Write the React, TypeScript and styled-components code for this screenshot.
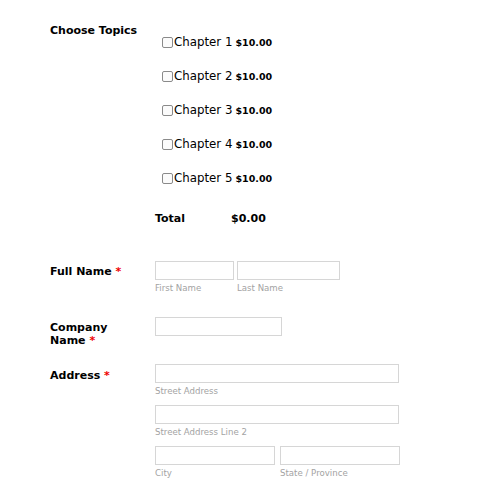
import React from 'react'
import styled, { createGlobalStyle } from 'styled-components'

const GlobalStyle = createGlobalStyle`
  body {
    margin: 0;
    background: #fff;
    font-family: 'DejaVu Sans', Verdana, sans-serif;
    color: #000;
  }
`

const Form = styled.div`
  padding: 22px 0 0 50px;
  width: 450px;
`

const Line = styled.div<{ mb?: number }>`
  display: grid;
  grid-template-columns: 105px 1fr;
  margin-bottom: ${({ mb }) => (mb !== undefined ? mb : 30)}px;
`

const Label = styled.div<{ pt?: number }>`
  font-size: 11px;
  font-weight: bold;
  line-height: 13px;
  padding-top: ${({ pt }) => pt || 0}px;
`

const Star = styled.span`
  color: #e00;
`

const Topics = styled.div`
  padding: 10px 0 0 7px;
  display: flex;
  flex-direction: column;
  gap: 14px;
`

const Topic = styled.label`
  display: flex;
  align-items: center;
  height: 20px;
  font-size: 11.8px;
`

const Check = styled.span`
  width: 9px;
  height: 9px;
  border: 1px solid #8a8a8a;
  border-radius: 2px;
  margin-right: 1px;
  margin-top: 1px;
  background: #fbfbfb;
`

const Price = styled.b`
  font-size: 9.5px;
  margin-left: 3px;
  margin-top: 1px;
`

const Total = styled.div`
  display: flex;
  font-weight: bold;
  font-size: 11px;
  line-height: 13px;
  margin-top: 24px;
  & > span:first-child {
    width: 76px;
  }
`

const Fields = styled.div`
  display: flex;
  flex-direction: column;
  gap: 8px;
`

const FieldRow = styled.div<{ gap: number }>`
  display: flex;
  gap: ${({ gap }) => gap}px;
`

const Field = styled.div`
  display: flex;
  flex-direction: column;
`

const Input = styled.div<{ w: number }>`
  width: ${({ w }) => w}px;
  height: 19px;
  box-sizing: border-box;
  border: 1px solid #d6d6d6;
  background: #fff;
`

const Sub = styled.div`
  font-size: 8.6px;
  color: #a3a3a3;
  margin-top: 2px;
  line-height: 12px;
  height: 12px;
`

const chapters = [1, 2, 3, 4, 5]

export default function App() {
  return (
    <>
      <GlobalStyle />
      <Form>
        <Line mb={36}>
          <Label pt={2}>Choose Topics</Label>
          <div>
            <Topics>
              {chapters.map((n) => (
                <Topic key={n}>
                  <Check />
                  Chapter {n}
                  <Price>$10.00</Price>
                </Topic>
              ))}
            </Topics>
            <Total>
              <span>Total</span>
              <span>$0.00</span>
            </Total>
          </div>
        </Line>
        <Line mb={23}>
          <Label pt={4}>
            Full Name <Star>*</Star>
          </Label>
          <FieldRow gap={3}>
            <Field>
              <Input w={79} />
              <Sub>First Name</Sub>
            </Field>
            <Field>
              <Input w={103} />
              <Sub>Last Name</Sub>
            </Field>
          </FieldRow>
        </Line>
        <Line mb={17}>
          <Label pt={4}>
            Company
            <br />
            Name <Star>*</Star>
          </Label>
          <Field>
            <Input w={127} />
          </Field>
        </Line>
        <Line mb={0}>
          <Label pt={5}>
            Address <Star>*</Star>
          </Label>
          <Fields>
            <Field>
              <Input w={244} />
              <Sub>Street Address</Sub>
            </Field>
            <Field>
              <Input w={244} />
              <Sub>Street Address Line 2</Sub>
            </Field>
            <FieldRow gap={5}>
              <Field>
                <Input w={120} />
                <Sub>City</Sub>
              </Field>
              <Field>
                <Input w={120} />
                <Sub>State / Province</Sub>
              </Field>
            </FieldRow>
          </Fields>
        </Line>
      </Form>
    </>
  )
}
